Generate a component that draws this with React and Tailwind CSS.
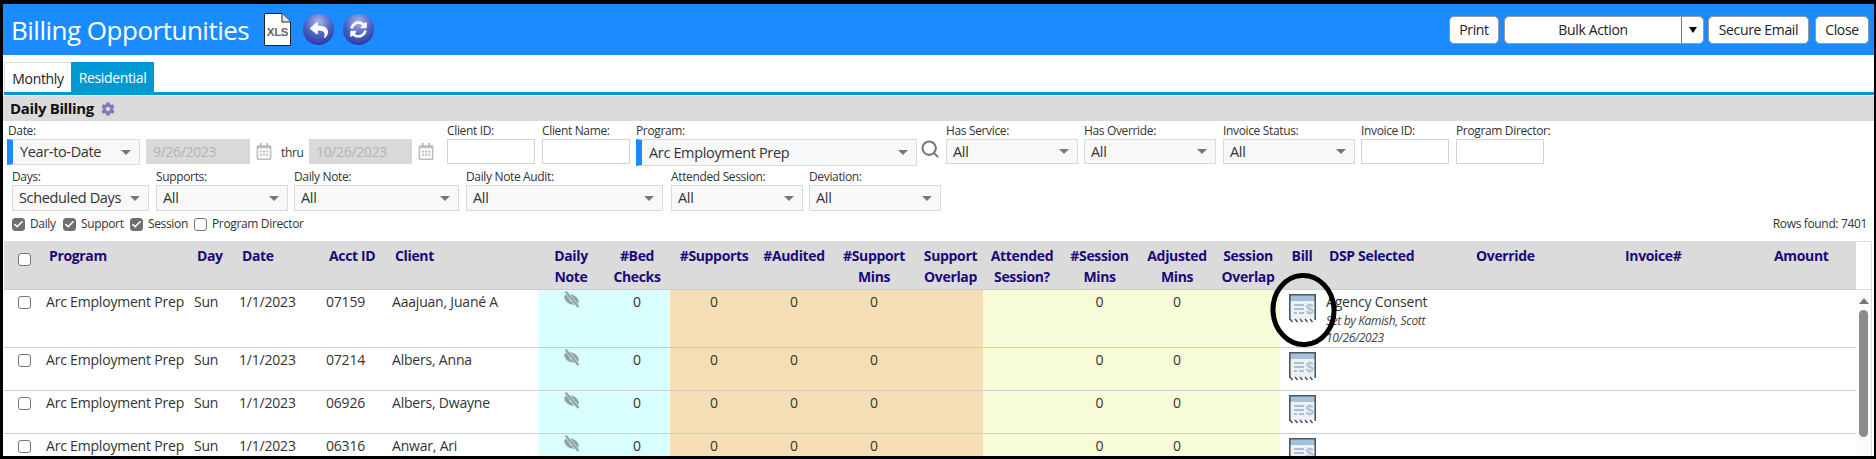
import { FaCog, FaReply, FaSyncAlt, FaRegCalendarAlt } from 'react-icons/fa'
import { Search, Check } from 'lucide-react'

const COLS = [
  'w-[40px]', 'w-[148px]', 'w-[45px]', 'w-[87px]', 'w-[66px]', 'w-[148px]', 'w-[66px]', 'w-[66px]',
  'w-[88px]', 'w-[72px]', 'w-[88px]', 'w-[65px]', 'w-[78px]', 'w-[77px]', 'w-[78px]', 'w-[64px]',
  'w-[44px]', 'w-[147px]', 'w-[149px]', 'w-[149px]', 'w-[87px]',
]

const ROWS = [
  { id: '07159', name: 'Aaajuan, Juané A', height: 'h-[58px]', dsp: true },
  { id: '07214', name: 'Albers, Anna', height: 'h-[43px]' },
  { id: '06926', name: 'Albers, Dwayne', height: 'h-[43px]' },
  { id: '06316', name: 'Anwar, Ari', height: 'h-[43px]' },
]

const Caret = () => <span className="h-0 w-0 border-x-[5px] border-t-[5px] border-x-transparent border-t-[#777]" />

function Select({ value, className, stripe }) {
  return (
    <div className={`flex items-center justify-between bg-[#f8f8f8] border border-[#d9d9d9] pr-[8px] text-[14.5px] text-[#333] ${stripe ? 'border-l-[6px] border-l-[#1a8cff] pl-[7px]' : 'pl-[6px]'} ${className}`}>
      <span className="whitespace-nowrap">{value}</span>
      <Caret />
    </div>
  )
}

function Field({ label, className, children }) {
  return (
    <div className={className}>
      <div className="h-[18px] pt-[2px] text-[12px] leading-[16px] text-[#333] whitespace-nowrap">{label}</div>
      {children}
    </div>
  )
}

const TextBox = ({ className }) => <div className={`h-[25px] border border-[#d4d4d4] bg-white ${className}`} />

const DisabledDate = ({ value, className }) => (
  <div className={`h-[25px] bg-[#d9d9d9] pl-[7px] text-[14px] leading-[26px] text-[#b4b4b4] ${className}`}>{value}</div>
)

const CalIcon = ({ className }) => <FaRegCalendarAlt className={`shrink-0 text-[#bdbdbd] w-[16px] h-[17px] ${className}`} />

function Tick({ label, checked, className }) {
  return (
    <div className={`flex items-center gap-[5px] ${className}`}>
      <span className={`flex items-center justify-center w-[13px] h-[13px] rounded-[3px] border ${checked ? 'bg-[#6f6f6f] border-[#6f6f6f]' : 'bg-white border-[#777]'}`}>
        {checked && <Check className="w-[11px] h-[11px] text-white" strokeWidth={3.5} />}
      </span>
      <span className="text-[12px] text-[#333]">{label}</span>
    </div>
  )
}

const RowBox = ({ className }) => <span className={`block w-[13px] h-[13px] rounded-[3px] border border-[#777] bg-white ${className}`} />

function RoundIcon({ id, children }) {
  return (
    <span className="relative flex items-center justify-center w-[31px] h-[31px]">
      <svg viewBox="0 0 31 31" className="w-[31px] h-[31px]">
        <defs>
          <radialGradient id={id} cx="50%" cy="25%" r="80%">
            <stop offset="0%" stopColor="#a8b4ee" />
            <stop offset="55%" stopColor="#4a5fc4" />
            <stop offset="100%" stopColor="#26379a" />
          </radialGradient>
        </defs>
        <circle cx="15.5" cy="15.5" r="15.5" fill={`url(#${id})`} />
      </svg>
      {children}
    </span>
  )
}

const XlsIcon = () => (
  <svg viewBox="0 0 27 33" className="shrink-0 w-[27px] h-[33px]">
    <path d="M.5.5H18L26.5 9V32.5H.5Z" fill="#fff" stroke="#222" />
    <path d="M18 .5V9H26.5" fill="#e6e6e6" stroke="#222" />
    <text x="13.5" y="22.500" textAnchor="middle" fontSize="11.500" fontWeight="700" fill="#666" fontFamily="Liberation Sans, sans-serif">XLS</text>
  </svg>
)

const BillIcon = () => (
  <svg viewBox="0 0 27 29" className="block w-[27px] h-[29px] ml-[9px] mt-[4px]">
    <path d="M1 1H26V25H1Z" fill="#eef1f4" />
    <rect x="1" y="1" width="25" height="6" fill="#a6c0d8" />
    <path d="M.8 26V.8H26.2V26" fill="none" stroke="#4d5763" strokeWidth="1.6" />
    <path d="M5 11H15M5 15H15M5 19H8M10 19H15" stroke="#a6c0d8" strokeWidth="2" />
    <text x="20.500" y="20" textAnchor="middle" fontSize="14" fontWeight="700" fill="#a6c0d8" fontFamily="Liberation Sans, sans-serif">$</text>
    <path d="M1 25L3.500 28M6 25L8.500 28M11 25L13.500 28M16 25L18.500 28M21 25L23.500 28" stroke="#4d5763" strokeWidth="1.6" />
  </svg>
)

// eye with a slash, tilted the way the source icon is
const EyeOff = () => (
  <svg viewBox="0 0 17 17" className="block mx-auto w-[17px] h-[17px]">
    <g transform="rotate(25 8.500 8.500)">
      <path d="M.5 8.500C3 2 14 2 16.500 8.500C14 15 3 15 .5 8.500Z" fill="#8fa3a3" />
      <circle cx="8.500" cy="8.500" r="1.800" fill="#d9ffff" />
    </g>
    <path d="M2.500 .5L15.500 16" stroke="#d9ffff" strokeWidth="3.200" />
    <path d="M2.500 .5L15.500 16" stroke="#8fa3a3" strokeWidth="2.200" />
  </svg>
)

const Th = ({ children, left, className = '' }) => (
  <th className={`align-top pt-[3px] text-[14px] leading-[21px] font-bold text-[#1c0a78] ${left ? 'pl-[5px] text-left' : 'text-center'} ${className}`}>
    {children}
  </th>
)

const Td = ({ children, bg = '', center }) => (
  <td className={`align-top pt-[2px] text-[14px] leading-[20px] text-[#333] whitespace-nowrap tracking-[-0.2px] ${center ? 'text-center' : 'pl-[2px]'} ${bg}`}>
    {children}
  </td>
)

const CYAN = 'bg-[#d9ffff]'
const PEACH = 'bg-[#f5deb3]'
const YELLOW = 'bg-[#f7fbd8]'

export default function App() {
  return (
    <div className="relative w-[1876px] h-[459px] overflow-hidden bg-black pt-[4px] pl-[3px] pr-[2px] pb-[3px] font-['Open_Sans',sans-serif] tracking-[-0.35px]">
      <div className="flex flex-col h-full bg-white overflow-hidden">
        {/* Title bar */}
        <div className="flex items-center h-[51px] shrink-0 bg-[#1a8cff] pl-[8px] pr-[5px]">
          <h1 className="text-[26px] tracking-[-0.5px] leading-none font-normal text-white w-[253px] shrink-0 whitespace-nowrap">Billing Opportunities</h1>
          <XlsIcon />
          <div className="flex gap-[9px] ml-[12px]">
            <RoundIcon id="backGrad"><FaReply className="absolute w-[18px] h-[18px] text-white" /></RoundIcon>
            <RoundIcon id="syncGrad"><FaSyncAlt className="absolute w-[17px] h-[17px] text-white" /></RoundIcon>
          </div>
          <div className="ml-auto flex text-[14px] text-[#222]">
            <button className="h-[28px] w-[50px] rounded-[5px] border border-[#999] bg-white">Print</button>
            <div className="flex h-[28px] w-[200px] ml-[5px] rounded-[5px] border border-[#999] bg-white overflow-hidden">
              <span className="flex-1 flex items-center justify-center">Bulk Action</span>
              <span className="flex items-center justify-center w-[22px] border-l border-[#777]">
                <span className="h-0 w-0 border-x-[4px] border-t-[6px] border-x-transparent border-t-black" />
              </span>
            </div>
            <button className="h-[28px] w-[101px] ml-[4px] rounded-[5px] border border-[#999] bg-white">Secure Email</button>
            <button className="h-[28px] w-[54px] ml-[6px] rounded-[5px] border border-[#999] bg-white">Close</button>
          </div>
        </div>

        {/* Tabs */}
        <div className="flex shrink-0 h-[37px] pt-[7px] pl-[1px]">
          <div className="w-[67px] bg-white border-t border-l border-[#ddd] text-center text-[14px] leading-[31px] text-[#222]">Monthly</div>
          <div className="w-[83px] bg-[#0099d5] text-center text-[14px] leading-[31px] text-white">Residential</div>
        </div>
        <div className="h-[3px] shrink-0 bg-[#0099d5] ml-[1px]" />

        {/* Section heading */}
        <div className="flex items-center shrink-0 h-[25px] mt-[1px] bg-[#dbdbdb] pl-[7px]">
          <span className="text-[15px] font-bold text-[#111]">Daily Billing</span>
          <FaCog className="ml-[7px] w-[14px] h-[14px] text-[#7c7cb8]" />
        </div>

        {/* Filters, first row */}
        <div className="flex shrink-0 h-[45px] pl-[4px]">
          <Field label={<span className="pl-[1px]">Date:</span>} className="w-[133px]">
            <Select value="Year-to-Date" stripe className="h-[26px] w-[133px]" />
          </Field>
          <div className="flex items-center ml-[6px] pt-[18px] h-[43px]">
            <DisabledDate value="9/26/2023" className="w-[104px]" />
            <CalIcon className="ml-[6px]" />
            <span className="ml-[9px] w-[21px] pt-[3px] text-[12px] text-[#333]">thru</span>
            <DisabledDate value="10/26/2023" className="ml-[7px] w-[103px]" />
            <CalIcon className="ml-[6px]" />
          </div>
          <Field label="Client ID:" className="ml-[13px] w-[88px]"><TextBox className="w-[88px]" /></Field>
          <Field label="Client Name:" className="ml-[7px] w-[88px]"><TextBox className="w-[88px]" /></Field>
          <Field label="Program:" className="ml-[6px] w-[281px]">
            <Select value="Arc Employment Prep" stripe className="h-[27px] w-[281px]" />
          </Field>
          <Search className="ml-[3px] mt-[18px] w-[20px] h-[20px] text-[#777]" strokeWidth={2.5} />
          <Field label="Has Service:" className="ml-[6px] w-[132px]"><Select value="All" className="h-[25px] w-[132px]" /></Field>
          <Field label="Has Override:" className="ml-[6px] w-[132px]"><Select value="All" className="h-[25px] w-[132px]" /></Field>
          <Field label="Invoice Status:" className="ml-[7px] w-[132px]"><Select value="All" className="h-[25px] w-[132px]" /></Field>
          <Field label="Invoice ID:" className="ml-[6px] w-[88px]"><TextBox className="w-[88px]" /></Field>
          <Field label="Program Director:" className="ml-[7px] w-[88px]"><TextBox className="w-[88px]" /></Field>
        </div>

        {/* Filters, second row */}
        <div className="flex shrink-0 h-[44px] pl-[9px] mt-[1px]">
          <Field label="Days:" className="w-[137px]"><Select value="Scheduled Days" className="h-[26px] w-[137px]" /></Field>
          <Field label="Supports:" className="ml-[7px] w-[132px]"><Select value="All" className="h-[26px] w-[132px]" /></Field>
          <Field label="Daily Note:" className="ml-[6px] w-[165px]"><Select value="All" className="h-[26px] w-[165px]" /></Field>
          <Field label="Daily Note Audit:" className="ml-[7px] w-[197px]"><Select value="All" className="h-[26px] w-[197px]" /></Field>
          <Field label="Attended Session:" className="ml-[8px] w-[132px]"><Select value="All" className="h-[26px] w-[132px]" /></Field>
          <Field label="Deviation:" className="ml-[6px] w-[132px]"><Select value="All" className="h-[26px] w-[132px]" /></Field>
        </div>

        {/* Checkboxes */}
        <div className="flex items-center shrink-0 h-[14px] mt-[6px] pl-[9px] pr-[7px]">
          <Tick label="Daily" checked className="w-[51px]" />
          <Tick label="Support" checked className="w-[67px]" />
          <Tick label="Session" checked className="w-[64px]" />
          <Tick label="Program Director" />
          <span className="ml-auto text-[12px] text-[#333]">Rows found: 7401</span>
        </div>

        {/* Grid */}
        <div className="flex flex-1 min-h-0 mt-[10px] ml-[1px] w-[1868px] border-t border-r border-[#ddd] overflow-hidden">
          <table className="table-fixed w-[1852px] shrink-0 self-start">
            <colgroup>
              {COLS.map((c, i) => <col key={i} className={c} />)}
            </colgroup>
            <thead>
              <tr className="h-[47px] bg-[#dbdbdb]">
                <th className="align-top pt-[11px] pl-[14px]"><RowBox /></th>
                <Th left>Program</Th>
                <Th left>Day</Th>
                <Th left>Date</Th>
                <Th left>Acct ID</Th>
                <Th left>Client</Th>
                <Th>Daily<br />Note</Th>
                <Th>#Bed<br />Checks</Th>
                <Th>#Supports</Th>
                <Th>#Audited</Th>
                <Th>#Support<br />Mins</Th>
                <Th>Support<br />Overlap</Th>
                <Th>Attended<br />Session?</Th>
                <Th>#Session<br />Mins</Th>
                <Th>Adjusted<br />Mins</Th>
                <Th>Session<br />Overlap</Th>
                <Th>Bill</Th>
                <Th left className="pl-[4px]">DSP Selected</Th>
                <Th left>Override</Th>
                <Th left>Invoice#</Th>
                <Th left>Amount</Th>
              </tr>
            </thead>
            <tbody>
              {ROWS.map((r) => (
                <tr key={r.id} className={`${r.height} border-t border-[#ccc]`}>
                  <td className="align-top pt-[6px] pl-[14px]"><RowBox /></td>
                  <Td>Arc Employment Prep</Td>
                  <Td>Sun</Td>
                  <Td>1/1/2023</Td>
                  <Td>{r.id}</Td>
                  <Td>{r.name}</Td>
                  <td className={`align-top pt-[1px] ${CYAN}`}><EyeOff /></td>
                  <Td center bg={CYAN}>0</Td>
                  <Td center bg={PEACH}>0</Td>
                  <Td center bg={PEACH}>0</Td>
                  <Td center bg={PEACH}>0</Td>
                  <Td center bg={PEACH} />
                  <Td center bg={YELLOW} />
                  <Td center bg={YELLOW}>0</Td>
                  <Td center bg={YELLOW}>0</Td>
                  <Td center bg={YELLOW} />
                  <td className="align-top"><BillIcon /></td>
                  <td className="align-top pt-[2px] pl-[2px]">
                    {r.dsp && (
                      <>
                        <div className="text-[14px] leading-[20px] text-[#333] tracking-[-0.2px]">Agency Consent</div>
                        <div className="text-[12px] leading-[18px] italic text-[#444] whitespace-nowrap">Set by Kamish, Scott</div>
                        <div className="text-[12px] leading-[16px] italic text-[#444]">10/26/2023</div>
                      </>
                    )}
                  </td>
                  <td />
                  <td />
                  <td />
                </tr>
              ))}
            </tbody>
          </table>

          {/* Scrollbar */}
          <div className="flex flex-col items-center w-[15px] shrink-0">
            <div className="h-[48px] w-full shrink-0 border-b border-[#ddd]" />
            <div className="flex flex-col items-center flex-1 w-full bg-[#fbfbfb] pt-[8px]">
              <span className="h-0 w-0 border-x-[5px] border-b-[6px] border-x-transparent border-b-[#777]" />
              <span className="mt-[6px] w-[9px] h-[127px] rounded-full bg-[#8b8b8b]" />
            </div>
          </div>
        </div>
      </div>

      {/* Hand-drawn circle around the Bill icon */}
      <svg viewBox="0 0 70 78" className="absolute left-[1267px] top-[271px] w-[70px] h-[78px]">
        <ellipse cx="36.500" cy="39" rx="30.500" ry="34.500" fill="none" stroke="#000" strokeWidth="5" transform="rotate(-3 36.500 39)" />
      </svg>
    </div>
  )
}
